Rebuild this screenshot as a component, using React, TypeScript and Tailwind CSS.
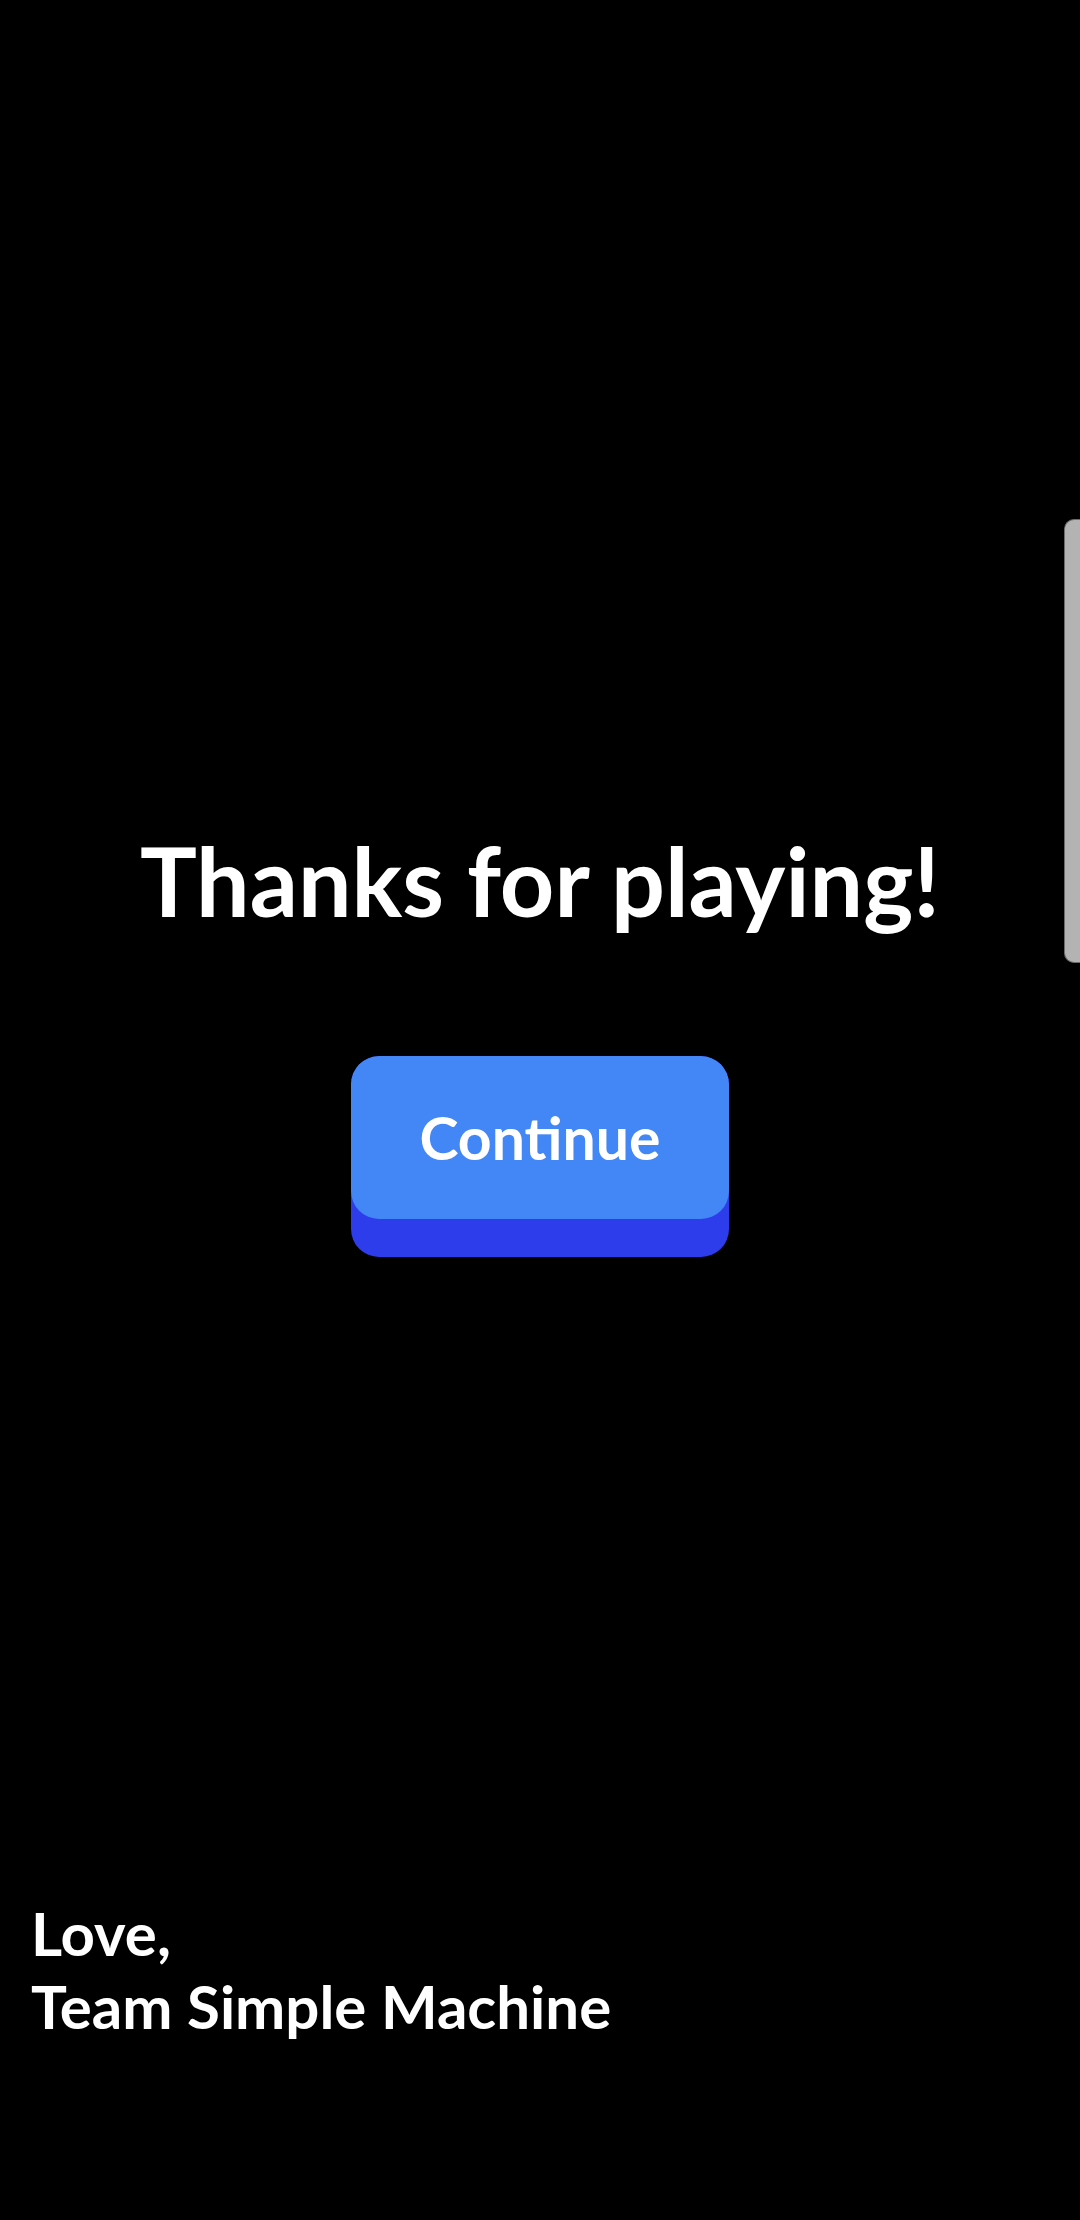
export default function App() {
  return (
    <div className="relative w-[1080px] h-[2220px] bg-black overflow-hidden text-white" style={{ fontFamily: '"Lato", "Noto Sans", sans-serif' }}>
      <div className="flex flex-col items-center pt-[820px]">
        <h1 className="text-[95px] leading-[120px] font-bold">Thanks for playing!</h1>
        <div className="mt-[116px] w-[378px] h-[201px] rounded-[28px] bg-[#2d3deb] overflow-hidden">
          <div className="h-[163px] rounded-[28px] bg-[#4287f5] flex items-center justify-center">
            <span className="text-[59px] font-bold leading-none">Continue</span>
          </div>
        </div>
      </div>
      <div className="pl-[31px] pt-[640px] text-[60px] font-bold leading-[73px]">
        <div>Love,</div>
        <div>Team Simple Machine</div>
      </div>
      <div className="absolute right-0 top-[519px] w-[16px] h-[444px] bg-[#b3b3b3] border border-r-0 border-[#6b6b6b] rounded-l-[10px]" />
    </div>
  );
}
